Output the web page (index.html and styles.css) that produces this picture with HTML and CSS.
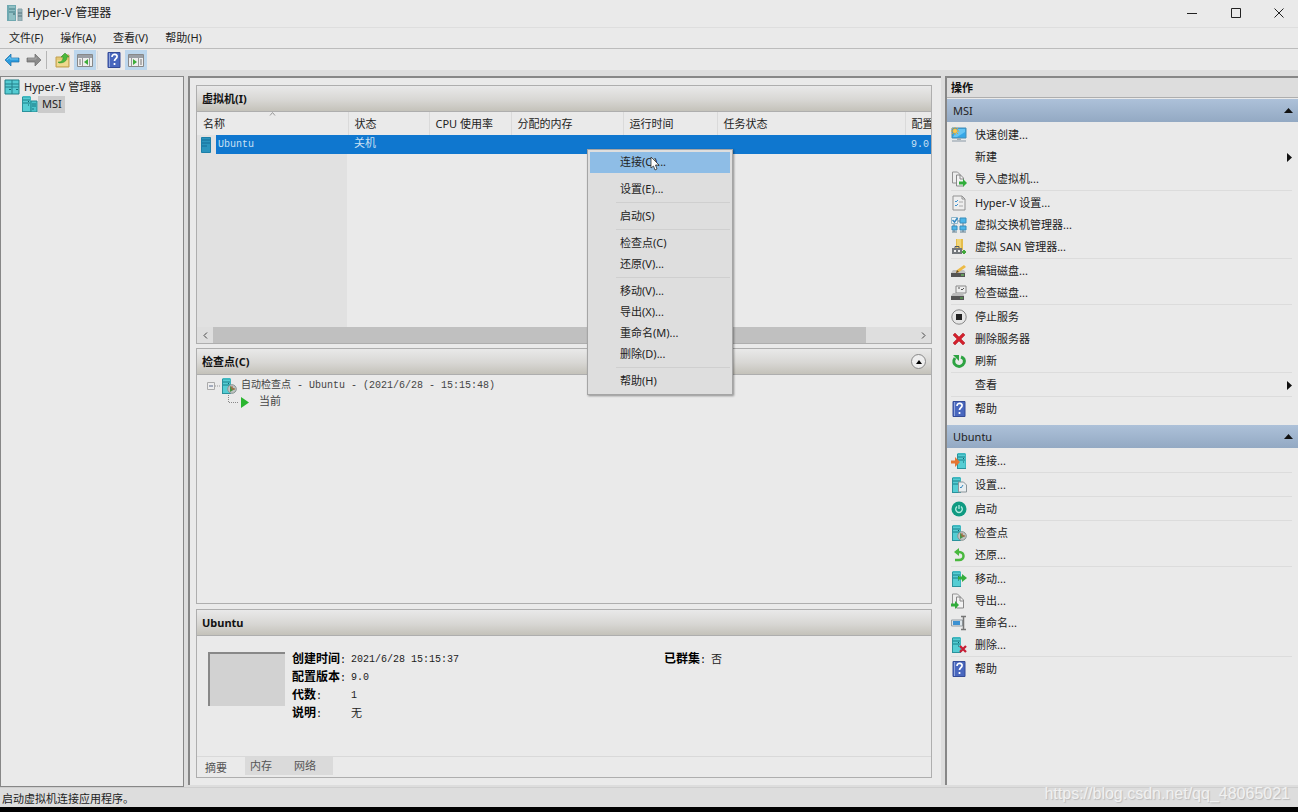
FILE: index.html
```html
<!DOCTYPE html>
<html lang="zh-CN">
<head>
<meta charset="utf-8">
<title>Hyper-V 管理器</title>
<link rel="stylesheet" href="styles.css">
</head>
<body>
<svg class="sprite" aria-hidden="true">
  <symbol id="server" viewBox="0 0 16 16"><path d="M2 1l1-1h7l1 1v14H2z" fill="#3fb7bf"/><path d="M3 2h7v13H3z" fill="#55cdd3"/><path d="M3 4h7M3 7h7" stroke="#187e89"/><path d="M8 5.500h1M8 9h1" stroke="#115e69"/><path d="M2 15.500h9M2.500 1v14" stroke="#2a929c"/></symbol>
  <symbol id="host" viewBox="0 0 16 16"><use href="#server" width="16" height="16" x="-2"/><path d="M9 5h6v11H9z" fill="#4bc4cb" stroke="#23868f"/><path d="M10 8h4M10 10h4M10 13h2" stroke="#1b7580"/></symbol>
  <symbol id="apphost" viewBox="0 0 16 16"><path d="M0 0h9v16H0z" fill="#6fa9b1"/><path d="M2 1h6v14H2z" fill="#91c0c4"/><path d="M2 4h6M2 7h6" stroke="#427c85"/><path d="M6 9h2" stroke="#365f66"/><path d="M11 4h4v12h-4z" fill="#9ab5bb" stroke="#85a1a8"/><path d="M11 8h4M11 11h4" stroke="#54727c"/></symbol>
  <symbol id="manager" viewBox="0 0 16 16"><path d="M1 1h14v14H1z" fill="#55cbd2" stroke="#217e87"/><path d="M1 5h14M8 1v14M1 8h14" stroke="#257f89"/><path d="M5 10.500h2M12 10.500h2" stroke="#146d75"/></symbol>
  <symbol id="back" viewBox="0 0 16 16"><path d="M1 8l6-6v4h8v4H7v4z" fill="#2d9cdd" stroke="#1b6ea8" stroke-width=".7"/><path d="M3 8l3-3v2h8" fill="none" stroke="#71c7f0"/></symbol>
  <symbol id="forward" viewBox="0 0 16 16"><path d="M15 8L9 2v4H1v4h8v4z" fill="#8b8b8b" stroke="#6c6c6c" stroke-width=".7"/><path d="M2 7h8V5" fill="none" stroke="#aaa"/></symbol>
  <symbol id="folder" viewBox="0 0 16 16"><path d="M1 5h6l1-2h6v12H1z" fill="#e4c875" stroke="#c2a050"/><path d="M2 8h11v6H2z" fill="#efd98e"/><path d="M3 10c4 0 5-2 5-5H6l4-4 4 4h-2c0 4-3 6-8 6z" fill="#4bb83b" stroke="#328c2b" stroke-width=".5"/></symbol>
  <symbol id="pane-left" viewBox="0 0 16 16"><path d="M.5 2.500h15v12H.5z" fill="#eee" stroke="#888"/><path d="M1 3h14v3H1z" fill="#9a9fa5"/><path d="M5.500 6v8M12.500 6v8" stroke="#999"/><path d="M2 8h2M2 10h2M2 12h2" stroke="#777"/><path d="M11 7v6l-4-3z" fill="#3cac38"/></symbol>
  <symbol id="pane-right" viewBox="0 0 16 16"><path d="M.5 2.500h15v12H.5z" fill="#eee" stroke="#888"/><path d="M1 3h14v3H1z" fill="#9a9fa5"/><path d="M3.500 6v8M10.500 6v8" stroke="#999"/><path d="M12 8h2M12 10h2M12 12h2" stroke="#777"/><path d="M5 7v6l4-3z" fill="#3cac38"/></symbol>
  <symbol id="help" viewBox="0 0 16 16"><path d="M2 .5h12v15H2z" fill="#4967be" stroke="#344b97"/><path d="M3.500 1v14" stroke="#90a5dc"/><path d="M6 5c0-4 6-3 5 0-.4 1.500-2.500 2-2.500 4M8.500 11v2" fill="none" stroke="#fff" stroke-width="1.700"/></symbol>
  <symbol id="monitor" viewBox="0 0 16 16"><path d="M1 1h14v10H1z" fill="#36a7e7" stroke="#468cb3"/><path d="M7 2h7v3L6 10H2z" fill="#66c5f4"/><path d="M6 11h4v2H6z" fill="#a3afb6"/><path d="M1 14h14" stroke="#8998a5"/><path d="M4 0v8M0 4h8M1 1l6 6M7 1L1 7" stroke="#e3a62f"/><circle cx="4" cy="4" r="2" fill="#ffc64b"/></symbol>
  <symbol id="pages" viewBox="0 0 16 16"><path d="M1.500 1h5l3 3v8h-8z" fill="#ededed" stroke="#929292"/><path d="M5.500 4h4l3 3v8h-7z" fill="#f3f3f3" stroke="#888"/><path d="M9 4v4h4" fill="none" stroke="#888"/></symbol>
  <symbol id="import" viewBox="0 0 16 16"><use href="#pages" width="16" height="16"/><path d="M8 10.500h4V8l4 4-4 4v-2.500H8z" fill="#31ad3b"/></symbol>
  <symbol id="export" viewBox="0 0 16 16"><use href="#pages" width="16" height="16"/><path d="M0 10.500h4V8l4 4-4 4v-2.500H0z" fill="#31ad3b"/></symbol>
  <symbol id="sheet" viewBox="0 0 16 16"><path d="M2 1h9l3 3v11H2z" fill="#eee" stroke="#929292"/><path d="M11 1v3h3" fill="none" stroke="#929292"/><path d="M4 6l1 1 2-2M4 10l1 1 2-2" fill="none" stroke="#3e91ce"/><path d="M8 7h4M8 11h4" stroke="#aaa"/></symbol>
  <symbol id="switch" viewBox="0 0 16 16"><path d="M9 1h6v5H9zM1 9h5v4H1zM9 9h6v4H9z" fill="#4eb6e9" stroke="#388cba"/><path d="M12 6v3M6 4h3M1 15h5M9 15h6M3 13v2M12 13v2M3 6v3" stroke="#5f7f92"/><path d="M.5.500h6v6h-6z" fill="#eef4f7" stroke="#91b6c9"/><path d="M1.500 3l2 2 3-4" fill="none" stroke="#3288c3" stroke-width="1.500"/></symbol>
  <symbol id="san" viewBox="0 0 16 16"><path d="M5 0h7v11H5z" fill="#e5bd4b"/><path d="M6 0h4v10H6z" fill="#f2d575"/><path d="M1 9h10v6H1z" fill="#73777b"/><path d="M4 9V7.500h4V9" fill="none" stroke="#54595d"/><path d="M3 11h2v2H3zM7 11h2v2H7z" fill="#eee"/><path d="M11 13h4M13 11v4" stroke="#43a83c" stroke-width="2"/></symbol>
  <symbol id="disk-edit" viewBox="0 0 16 16"><path d="M2 7h11l2 3H0z" fill="#c3c3c3"/><path d="M0 10h14v4H0z" fill="#555"/><path d="M10 12h3" stroke="#75e365"/><path d="M5 10l1-3 7-5 2 2-7 5z" fill="#edba45"/><path d="M5 10l1-3 2 2z" fill="#624a28"/></symbol>
  <symbol id="disk-check" viewBox="0 0 16 16"><path d="M5 1h10v7H5z" fill="#eee" stroke="#888"/><path d="M7 3h2M10 4l1 1 2-2" fill="none" stroke="#555"/><path d="M2 8h10l1 3H0z" fill="#bbb"/><path d="M0 11h13v4H0z" fill="#555"/><path d="M9 13h3" stroke="#5dbb51"/></symbol>
  <symbol id="stop" viewBox="0 0 16 16"><circle cx="8" cy="8" r="7.200" fill="#e6e6e6" stroke="#888"/><path d="M5 5h6v6H5z" fill="#222"/></symbol>
  <symbol id="cross" viewBox="0 0 16 16"><path d="M2 4l2-2 4 4 4-4 2 2-4 4 4 4-2 2-4-4-4 4-2-2 4-4z" fill="#d3202c" stroke="#ae1722" stroke-width=".5"/></symbol>
  <symbol id="refresh" viewBox="0 0 16 16"><path d="M4 5c-5 7 6 12 9 5 1-3 0-5-3-6" fill="none" stroke="#2da342" stroke-width="3"/><path d="M2 2h6v6z" fill="#2da342"/></symbol>
  <symbol id="connect" viewBox="0 0 16 16"><use href="#server" x="4" width="16" height="16"/><path d="M0 7.500h4V4l5 5-5 5v-3.500H0z" fill="#e57532"/></symbol>
  <symbol id="vm-settings" viewBox="0 0 16 16"><use href="#server" x="-1" width="16" height="16"/><path d="M7.500 5h5l3 3v7h-8z" fill="#e8edef" stroke="#8b9499"/><path d="M9 10l1 1 2-3" fill="none" stroke="#398ac0"/></symbol>
  <symbol id="power" viewBox="0 0 16 16"><circle cx="8" cy="8" r="7.500" fill="#109b82"/><path d="M6 5.500c-3 3 0 6 2 6s5-3 2-6M8 4v4" fill="none" stroke="#b5eee2" stroke-width="1.300"/></symbol>
  <symbol id="checkpoint" viewBox="0 0 16 16"><use href="#server" x="-1" width="16" height="16"/><circle cx="11" cy="11" r="4.300" fill="#bfc5c3" stroke="#8b9492"/><path d="M9 8v6l5-3z" fill="#4a9448"/><path d="M11 8v3h3" stroke="#c45d46" fill="none"/></symbol>
  <symbol id="revert" viewBox="0 0 16 16"><path d="M5 5h3c6 0 6 8 0 8H4" fill="none" stroke="#49b83e" stroke-width="2.500"/><path d="M3 5l5-4v8z" fill="#49b83e"/></symbol>
  <symbol id="move" viewBox="0 0 16 16"><use href="#server" x="-1" width="16" height="16"/><path d="M7 5.500h4V3l5 4-5 4V8.500H7z" fill="#34ae3d"/></symbol>
  <symbol id="rename" viewBox="0 0 16 16"><path d="M.5 5h11v6H.5z" fill="#dde5ea" stroke="#969da2"/><path d="M2 6h7v4H2z" fill="#3c91d2"/><path d="M10 1.500h5M10 14.500h5M12.500 2v12" stroke="#767676" stroke-width="1.500"/></symbol>
  <symbol id="vm-delete" viewBox="0 0 16 16"><use href="#server" x="-1" width="16" height="16"/><path d="M9 9l6 6M15 9l-6 6" stroke="#c71e35" stroke-width="2.300"/></symbol>
</svg>

<div class="window">
  <header class="titlebar">
    <svg class="icon"><use href="#apphost"/></svg>
    <h1 class="title">Hyper-V 管理器</h1>
    <div class="window-buttons">
      <button class="window-button" aria-label="最小化"><svg class="glyph" viewBox="0 0 10 10"><path d="M0 5.500h10"/></svg></button>
      <button class="window-button" aria-label="最大化"><svg class="glyph" viewBox="0 0 10 10"><path d="M.5.500h9v9h-9z"/></svg></button>
      <button class="window-button" aria-label="关闭"><svg class="glyph" viewBox="0 0 10 10"><path d="M.5.500l9 9M9.500.500l-9 9"/></svg></button>
    </div>
  </header>

  <nav class="menubar">
    <button>文件(F)</button>
    <button>操作(A)</button>
    <button>查看(V)</button>
    <button>帮助(H)</button>
  </nav>

  <div class="toolbar">
    <button class="tool" aria-label="后退"><svg class="icon"><use href="#back"/></svg></button>
    <button class="tool" aria-label="前进"><svg class="icon"><use href="#forward"/></svg></button>
    <span class="tool-divider"></span>
    <button class="tool" aria-label="上一级"><svg class="icon"><use href="#folder"/></svg></button>
    <button class="tool pressed" aria-label="显示控制台树"><svg class="icon"><use href="#pane-left"/></svg></button>
    <span class="tool-divider light"></span>
    <button class="tool" aria-label="帮助"><svg class="icon"><use href="#help"/></svg></button>
    <button class="tool pressed" aria-label="显示操作窗格"><svg class="icon"><use href="#pane-right"/></svg></button>
  </div>

  <main class="workspace">
    <aside class="tree">
      <button class="tree-item root"><svg class="icon"><use href="#manager"/></svg><span class="tree-label">Hyper-V 管理器</span></button>
      <button class="tree-item child"><svg class="icon"><use href="#host"/></svg><span class="tree-label selected">MSI</span></button>
    </aside>

    <div class="center">
      <section class="panel machines">
        <h2 class="panel-title">虚拟机(I)</h2>
        <div class="list">
          <table class="vm-table">
            <thead>
              <tr>
                <th class="col-name">名称<svg class="sort" viewBox="0 0 7 4"><path d="M1 3.500l2.500-3 2.500 3"/></svg></th>
                <th class="col-state">状态</th>
                <th class="col-cpu">CPU 使用率</th>
                <th class="col-memory">分配的内存</th>
                <th class="col-uptime">运行时间</th>
                <th>任务状态</th>
                <th class="col-version">配置</th>
              </tr>
            </thead>
            <tbody>
              <tr>
                <td class="name-cell"><span class="name"><svg class="vm-icon" viewBox="0 0 10 16"><path d="M.5.500h9v15h-9z" fill="#2b94bd" stroke="#1c7fa8"/><path d="M1 3h8M1 6h8M1 9h5" stroke="#156c98"/></svg>Ubuntu</span></td>
                <td class="cjk">关机</td><td></td><td></td><td></td><td></td><td>9.0</td>
              </tr>
            </tbody>
          </table>
        </div>
        <div class="scrollbar">
          <button class="scroll-button" aria-label="向左滚动"><svg class="chevron" viewBox="0 0 5 7"><path d="M4 .5l-3 3 3 3"/></svg></button>
          <div class="scroll-track"><div class="scroll-thumb"></div></div>
          <button class="scroll-button" aria-label="向右滚动"><svg class="chevron" viewBox="0 0 5 7"><path d="M1 .5l3 3-3 3"/></svg></button>
        </div>
      </section>

      <section class="panel checkpoints">
        <h2 class="panel-title">检查点(C)<button class="collapse" aria-label="折叠"><svg class="collapse-arrow" viewBox="0 0 6 4"><path d="M0 4l3-4 3 4z"/></svg></button></h2>
        <div class="checkpoint-tree">
          <div class="checkpoint-row"><svg class="expander" viewBox="0 0 14 8"><path d="M.5.500h7v7h-7z" fill="#eee" stroke="#aaa"/><path d="M2 4h4" stroke="#5b6b8d"/><path d="M8 4h6" stroke="#999" stroke-dasharray="1 1"/></svg><svg class="icon"><use href="#checkpoint"/></svg><span class="checkpoint-label">自动检查点 - Ubuntu - (2021/6/28 - 15:15:48)</span></div>
          <div class="checkpoint-row current"><svg class="branch" viewBox="0 0 20 14"><path d="M.5 0v8M1 7.500h10" fill="none" stroke="#888" stroke-dasharray="1 1"/><path d="M13 2v11l8-5.500z" fill="#2ab52f"/></svg><span class="cjk">当前</span></div>
        </div>
      </section>

      <section class="panel details">
        <h2 class="panel-title">Ubuntu</h2>
        <div class="summary">
          <div class="thumbnail"></div>
          <dl class="facts">
            <dt>创建时间<span class="colon">:</span></dt><dd>2021/6/28 15:15:37</dd>
            <dt>配置版本<span class="colon">:</span></dt><dd>9.0</dd>
            <dt>代数<span class="colon">:</span></dt><dd>1</dd>
            <dt>说明<span class="colon">:</span></dt><dd class="cjk">无</dd>
          </dl>
          <dl class="facts cluster">
            <dt>已群集<span class="colon">:</span></dt><dd class="cjk">否</dd>
          </dl>
        </div>
        <div class="tabs">
          <button class="tab active">摘要</button>
          <button class="tab">内存</button>
          <button class="tab">网络</button>
        </div>
      </section>
    </div>

    <aside class="actions">
      <h2 class="actions-title">操作</h2>
      <h3 class="group-title">MSI<svg class="up" viewBox="0 0 9 5"><path d="M0 5l4.500-5L9 5z"/></svg></h3>
      <div class="group">
        <button class="action"><svg class="icon"><use href="#monitor"/></svg>快速创建...</button>
        <button class="action"><span class="icon"></span>新建<svg class="more" viewBox="0 0 5 9"><path d="M0 0l5 4.500L0 9z"/></svg></button>
        <button class="action"><svg class="icon"><use href="#import"/></svg>导入虚拟机...</button>
        <hr class="rule">
        <button class="action"><svg class="icon"><use href="#sheet"/></svg>Hyper-V 设置...</button>
        <button class="action"><svg class="icon"><use href="#switch"/></svg>虚拟交换机管理器...</button>
        <button class="action"><svg class="icon"><use href="#san"/></svg>虚拟 SAN 管理器...</button>
        <hr class="rule">
        <button class="action"><svg class="icon"><use href="#disk-edit"/></svg>编辑磁盘...</button>
        <button class="action"><svg class="icon"><use href="#disk-check"/></svg>检查磁盘...</button>
        <hr class="rule">
        <button class="action"><svg class="icon"><use href="#stop"/></svg>停止服务</button>
        <button class="action"><svg class="icon"><use href="#cross"/></svg>删除服务器</button>
        <button class="action"><svg class="icon"><use href="#refresh"/></svg>刷新</button>
        <hr class="rule">
        <button class="action"><span class="icon"></span>查看<svg class="more" viewBox="0 0 5 9"><path d="M0 0l5 4.500L0 9z"/></svg></button>
        <hr class="rule">
        <button class="action"><svg class="icon"><use href="#help"/></svg>帮助</button>
      </div>
      <h3 class="group-title">Ubuntu<svg class="up" viewBox="0 0 9 5"><path d="M0 5l4.500-5L9 5z"/></svg></h3>
      <div class="group">
        <button class="action"><svg class="icon"><use href="#connect"/></svg>连接...</button>
        <hr class="rule">
        <button class="action"><svg class="icon"><use href="#vm-settings"/></svg>设置...</button>
        <hr class="rule">
        <button class="action"><svg class="icon"><use href="#power"/></svg>启动</button>
        <hr class="rule">
        <button class="action"><svg class="icon"><use href="#checkpoint"/></svg>检查点</button>
        <button class="action"><svg class="icon"><use href="#revert"/></svg>还原...</button>
        <hr class="rule">
        <button class="action"><svg class="icon"><use href="#move"/></svg>移动...</button>
        <button class="action"><svg class="icon"><use href="#export"/></svg>导出...</button>
        <button class="action"><svg class="icon"><use href="#rename"/></svg>重命名...</button>
        <button class="action"><svg class="icon"><use href="#vm-delete"/></svg>删除...</button>
        <hr class="rule">
        <button class="action"><svg class="icon"><use href="#help"/></svg>帮助</button>
      </div>
    </aside>
  </main>

  <footer class="statusbar">
    <span>启动虚拟机连接应用程序。</span>
    <span class="watermark">https://blog.csdn.net/qq_48065021</span>
  </footer>
</div>

<div class="context-menu" role="menu">
  <button class="menu-item hover" role="menuitem">连接(O)...</button>
  <div class="menu-gap"></div>
  <button class="menu-item" role="menuitem">设置(E)...</button>
  <hr class="menu-rule">
  <button class="menu-item" role="menuitem">启动(S)</button>
  <hr class="menu-rule">
  <button class="menu-item" role="menuitem">检查点(C)</button>
  <button class="menu-item" role="menuitem">还原(V)...</button>
  <hr class="menu-rule">
  <button class="menu-item" role="menuitem">移动(V)...</button>
  <button class="menu-item" role="menuitem">导出(X)...</button>
  <button class="menu-item" role="menuitem">重命名(M)...</button>
  <button class="menu-item" role="menuitem">删除(D)...</button>
  <hr class="menu-rule">
  <button class="menu-item" role="menuitem">帮助(H)</button>
</div>
<svg class="cursor" viewBox="0 0 10 16"><path d="M1 1v11l2.500-2 1.500 4 2-1-1.500-4H9z" fill="#fff" stroke="#333" stroke-width=".8"/></svg>
</body>
</html>
```

FILE: styles.css
```css
:root {
  --surface: #eaeaea;
  --chrome: #dddddd;
  --line: #aeaeae;
  --edge: #878787;
  --ui: "Noto Sans", "Noto Sans CJK SC", sans-serif;
  --mono: "Liberation Mono", "Noto Sans CJK SC", monospace;
}

* { box-sizing: border-box; }

body {
  margin: 0;
  background: #000;
  color: #222;
  font: 11px/16px var(--ui);
}

button {
  margin: 0;
  padding: 0;
  border: 0;
  background: none;
  color: inherit;
  font: inherit;
  text-align: left;
}

h1, h2, h3, dl, dd, hr { margin: 0; }

.sprite { position: absolute; width: 0; height: 0; }
.icon { display: block; flex: none; width: 16px; height: 16px; }

.window {
  display: flex;
  flex-direction: column;
  min-height: 100vh;
  border-bottom: 5px solid #000;
  background: var(--chrome);
}

.titlebar {
  display: flex;
  align-items: center;
  gap: 4px;
  height: 27px;
  padding: 0 0 2px 7px;
  background: var(--surface);
}
.title { font-size: 12px; font-weight: 400; }
.window-buttons { display: flex; margin-left: auto; }
.window-button { display: grid; place-items: center; width: 44px; height: 25px; }
.window-button:last-child { width: 40px; padding-left: 2px; }
.glyph { width: 10px; height: 10px; fill: none; stroke: #222; }

.menubar {
  display: flex;
  gap: 17px;
  height: 22px;
  padding: 0 9px;
  border-top: 1px solid #dedede;
  border-bottom: 1px solid #bcbcbc;
  background: var(--surface);
}

.toolbar {
  display: flex;
  align-items: center;
  height: 21px;
  padding-left: 1px;
  background: var(--surface);
}
.tool { display: grid; place-items: center; width: 22px; height: 20px; }
.pressed { background: #bcd6ec; }
.tool-divider { width: 1px; height: 18px; margin: 0 5px 0 1px; background: #b5b5b5; }
.tool-divider.light { margin: 0 5px 0 1px; background: #ddd; }

.workspace {
  display: grid;
  grid-template-columns: 184px minmax(0, 1fr) 353px;
  column-gap: 4px;
  flex: 1;
  padding-top: 6px;
}

.tree {
  padding-top: 2px;
  border: 1px solid var(--edge);
  background: var(--surface);
}
.tree-item { display: flex; height: 17px; gap: 4px; }
.root { padding-left: 3px; }
.child { padding-left: 21px; }
.tree-label { padding-right: 3px; }
.child { gap: 0; }
.selected { padding: 0 3px 0 4px; background: #cbcbcb; }

.center {
  display: flex;
  flex-direction: column;
  margin-bottom: 2px;
  padding: 7px 9px 7px 6px;
  border: solid var(--edge);
  border-width: 2px 0 0 2px;
  background: var(--surface);
}

.panel { display: flex; flex-direction: column; border: 1px solid var(--line); }
.panel-title {
  display: flex;
  align-items: center;
  justify-content: space-between;
  height: 26px;
  padding: 0 5px;
  border-bottom: 1px solid var(--line);
  background: linear-gradient(#e9e9e9, #d8d7d4 55%, #c4c2ba);
  color: #111;
  font-size: 11px;
  font-weight: 700;
}
.machines { height: 259px; }
.checkpoints { flex: 1; margin: 4px 0 5px; }
.details { height: 169px; }

.list {
  flex: 1;
  background: linear-gradient(to right, #e1e1e1 150px, var(--surface) 150px);
}
.vm-table { width: 100%; border-collapse: collapse; table-layout: fixed; }
.vm-table th {
  position: relative;
  height: 23px;
  padding: 0 6px;
  overflow: hidden;
  border-right: 1px solid #dadada;
  background: var(--surface);
  font-weight: 400;
  text-align: left;
  white-space: nowrap;
}
.vm-table .col-version { width: 26px; padding-right: 0; border: 0; }
.col-name { width: 151px; }
.col-state { width: 81px; }
.col-cpu { width: 82px; }
.col-memory { width: 112px; }
.col-uptime { width: 94px; }
.sort { position: absolute; top: 0; left: 72px; width: 7px; height: 4px; fill: none; stroke: #999; }
.vm-table td {
  height: 19px;
  padding: 0 0 0 6px;
  background: #0f77cf;
  color: #c9e0f3;
  font: 10px/19px var(--mono);
  white-space: nowrap;
}
.vm-table .name-cell { padding-left: 4px; background: linear-gradient(to right, #e1e1e1 19px, #0f77cf 19px); }
.name { display: flex; align-items: center; gap: 7px; }
.vm-icon { width: 10px; height: 16px; }
.vm-table .cjk, .cjk { font-size: 11px; }

.scrollbar { display: flex; height: 16px; background: #dedede; }
.scroll-button { display: grid; place-items: center; width: 16px; }
.chevron { width: 5px; height: 7px; fill: none; stroke: #444; }
.scroll-track { flex: 1; }
.scroll-thumb { width: 93%; height: 100%; background: #c0c0c0; }

.collapse {
  display: grid;
  place-items: center;
  width: 15px;
  height: 15px;
  border: 1px solid #888;
  border-radius: 50%;
  background: #eee;
}
.collapse-arrow { width: 6px; height: 4px; }

.checkpoint-tree { padding: 3px 10px; color: #444; font: 10px/16px var(--mono); }
.checkpoint-row { display: flex; align-items: center; height: 16px; }
.expander { width: 14px; height: 8px; }
.checkpoint-label { margin-left: 4px; }
.current { padding-left: 21px; }
.branch { width: 20px; height: 14px; margin-right: 11px; overflow: visible; }

.summary { display: flex; flex: 1; padding: 15px 11px 0; }
.thumbnail {
  width: 77px;
  height: 54px;
  margin: 1px 7px 0 0;
  border: solid #888;
  border-width: 2px 0 0 2px;
  background: #d2d2d2;
}
.facts {
  display: grid;
  grid-template-columns: 59px 1fr;
  grid-auto-rows: 18px;
  flex: 1;
  font: 10px/18px var(--mono);
}
.facts dt { color: #000; font-size: 12px; font-weight: 700; white-space: nowrap; }
.colon { font-size: 10px; font-weight: 400; }
.cluster { flex: 0 0 256px; grid-template-columns: 47px 1fr; }

.tabs { display: flex; height: 21px; padding-left: 1px; border-top: 1px solid #d9d9d9; color: #555; }
.tab { width: 44px; height: 18px; padding: 0 5px; background: #dadada; }
.tab.active { width: 47px; height: 20px; padding: 2px 7px 0; background: var(--surface); }

.actions {
  margin-bottom: 2px;
  border: solid var(--edge);
  border-width: 2px 0 0 2px;
  background: var(--surface);
}
.actions-title {
  height: 20px;
  padding: 2px 4px 0;
  border-bottom: 1px solid var(--line);
  background: var(--chrome);
  color: #111;
  font-size: 11px;
}
.group-title {
  display: flex;
  align-items: center;
  justify-content: space-between;
  height: 23px;
  margin-top: 1px;
  padding: 0 5px 0 6px;
  background: linear-gradient(#adc1d9, #93a9c3);
  font-size: 11px;
  font-weight: 400;
}
.group + .group-title { margin-top: 5px; }
.up { width: 9px; height: 5px; fill: #111; }
.group { padding: 2px 6px 0 4px; }
.action { display: flex; align-items: center; gap: 8px; width: 100%; height: 22px; }
.more { width: 5px; height: 9px; margin-left: auto; fill: #111; }
.rule { height: 2px; border: 0; border-top: 1px solid #dcdcdc; }

.statusbar {
  display: flex;
  align-items: center;
  justify-content: space-between;
  height: 20px;
  padding: 2px 8px 0 2px;
  border-top: 1px solid #cecece;
}
.watermark {
  margin-top: -10px;
  color: #f1f1f1;
  font: 16px/16px "Liberation Sans", sans-serif;
  text-shadow: 1px 1px 1px #bbb;
}

.context-menu {
  position: absolute;
  top: 149px;
  left: 587px;
  width: 146px;
  padding: 2px;
  border: 1px solid #a5a5a5;
  background: #dedede;
  box-shadow: 1px 1px 2px #0006;
}
.menu-item { display: block; width: 100%; height: 21px; padding: 0 0 2px 30px; }
.hover { background: #8ebde6; }
.menu-gap { height: 6px; }
.menu-rule { height: 6px; margin-left: 26px; border: 0; background: linear-gradient(transparent 2px, #cfcfcf 2px, #cfcfcf 3px, transparent 3px); }
.cursor { position: absolute; top: 156px; left: 650px; width: 10px; height: 16px; }
```
